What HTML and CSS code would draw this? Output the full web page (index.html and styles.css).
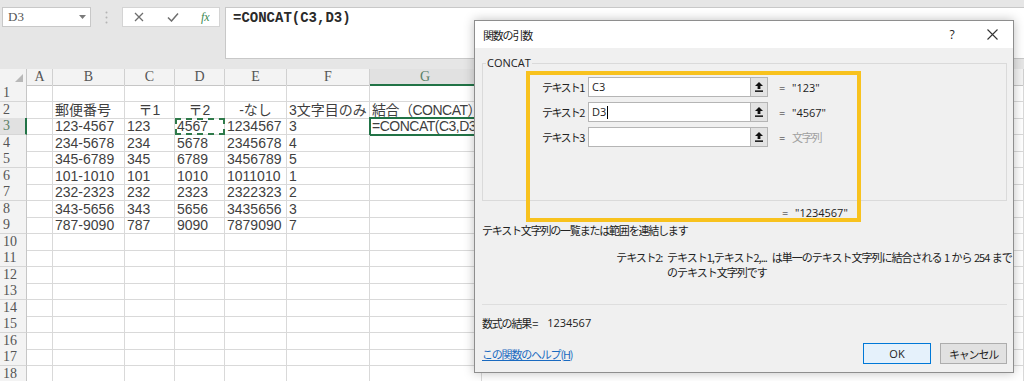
FILE: index.html
```html
<!DOCTYPE html>
<html lang="ja">
<head>
<meta charset="utf-8">
<title>関数の引数</title>
<link rel="stylesheet" href="styles.css">
</head>
<body>
<div class="app">
  <div class="fbar">
    <div class="namebox"><span class="nb-text">D3</span><svg class="nb-arrow" width="7" height="4" viewBox="0 0 7 4"><path d="M0 0H7L3.5 4Z" fill="#7a7a7a"/></svg></div>
    <div class="dots"><svg width="3" height="13" viewBox="0 0 3 13"><circle cx="1.5" cy="1.5" r="1" fill="#b4b4b4"/><circle cx="1.5" cy="6.5" r="1" fill="#b4b4b4"/><circle cx="1.5" cy="11.5" r="1" fill="#b4b4b4"/></svg></div>
    <div class="fbtns">
      <svg class="fb-x" width="10" height="10" viewBox="0 0 10 10"><path d="M1 1L9 9M9 1L1 9" stroke="#6e6e6e" stroke-width="1.3" fill="none"/></svg>
      <svg class="fb-ok" width="12" height="10" viewBox="0 0 12 10"><path d="M1 5.5L4.5 9L11 1.5" stroke="#6e6e6e" stroke-width="1.5" fill="none"/></svg>
      <span class="fb-fx">fx</span>
    </div>
    <div class="fbox">=CONCAT(C3,D3)</div>
  </div>

  <div class="sheet">
    <div class="r hdr"><span class="corner"><svg width="8" height="8" viewBox="0 0 8 8"><path d="M8 0V8H0Z" fill="#b8b8b8"/></svg></span><span>A</span><span>B</span><span>C</span><span>D</span><span>E</span><span>F</span><span class="sel">G</span><span>H</span></div>
    <div class="r"><span>1</span><span></span><span></span><span></span><span></span><span></span><span></span><span></span><span></span></div>
    <div class="r"><span>2</span><span></span><span>郵便番号</span><span class="c">〒1</span><span class="c">〒2</span><span class="c">-なし</span><span>3文字目のみ</span><span class="tight">結合（CONCAT）</span><span></span></div>
    <div class="r"><span class="sel">3</span><span></span><span>123-4567</span><span>123</span><span class="ants">4567</span><span>1234567</span><span>3</span><span class="active tight">=CONCAT(C3,D3)</span><span></span></div>
    <div class="r"><span>4</span><span></span><span>234-5678</span><span>234</span><span>5678</span><span>2345678</span><span>4</span><span></span><span></span></div>
    <div class="r"><span>5</span><span></span><span>345-6789</span><span>345</span><span>6789</span><span>3456789</span><span>5</span><span></span><span></span></div>
    <div class="r"><span>6</span><span></span><span>101-1010</span><span>101</span><span>1010</span><span>1011010</span><span>1</span><span></span><span></span></div>
    <div class="r"><span>7</span><span></span><span>232-2323</span><span>232</span><span>2323</span><span>2322323</span><span>2</span><span></span><span></span></div>
    <div class="r"><span>8</span><span></span><span>343-5656</span><span>343</span><span>5656</span><span>3435656</span><span>3</span><span></span><span></span></div>
    <div class="r"><span>9</span><span></span><span>787-9090</span><span>787</span><span>9090</span><span>7879090</span><span>7</span><span></span><span></span></div>
    <div class="r"><span>10</span><span></span><span></span><span></span><span></span><span></span><span></span><span></span><span></span></div>
    <div class="r"><span>11</span><span></span><span></span><span></span><span></span><span></span><span></span><span></span><span></span></div>
    <div class="r"><span>12</span><span></span><span></span><span></span><span></span><span></span><span></span><span></span><span></span></div>
    <div class="r"><span>13</span><span></span><span></span><span></span><span></span><span></span><span></span><span></span><span></span></div>
    <div class="r"><span>14</span><span></span><span></span><span></span><span></span><span></span><span></span><span></span><span></span></div>
    <div class="r"><span>15</span><span></span><span></span><span></span><span></span><span></span><span></span><span></span><span></span></div>
    <div class="r"><span>16</span><span></span><span></span><span></span><span></span><span></span><span></span><span></span><span></span></div>
    <div class="r"><span>17</span><span></span><span></span><span></span><span></span><span></span><span></span><span></span><span></span></div>
    <div class="r"><span>18</span><span></span><span></span><span></span><span></span><span></span><span></span><span></span><span></span></div>
  </div>

  <div class="dialog">
    <div class="titlebar">
      <span class="title jp">関数の引数</span>
      <span class="help">?</span>
      <svg class="close" width="11" height="11" viewBox="0 0 11 11"><path d="M0.5 0.5L10.5 10.5M10.5 0.5L0.5 10.5" stroke="#333" stroke-width="1.1" fill="none"/></svg>
    </div>
    <div class="dbody">
      <div class="group">
        <span class="legend">CONCAT</span>
        <div class="arg">
          <span class="alabel jp">テキスト1</span>
          <span class="ainput">C3</span>
          <span class="abtn"><svg width="8" height="10" viewBox="0 0 8 10"><path d="M4 0L8 4H5.4V7H2.6V4H0Z" fill="#111"/><rect x="0" y="8.4" width="8" height="1.5" fill="#111"/></svg></span>
          <span class="aeq">=</span>
          <span class="aval">"123"</span>
        </div>
        <div class="arg">
          <span class="alabel jp">テキスト2</span>
          <span class="ainput">D3<i class="caret"></i></span>
          <span class="abtn"><svg width="8" height="10" viewBox="0 0 8 10"><path d="M4 0L8 4H5.4V7H2.6V4H0Z" fill="#111"/><rect x="0" y="8.4" width="8" height="1.5" fill="#111"/></svg></span>
          <span class="aeq">=</span>
          <span class="aval">"4567"</span>
        </div>
        <div class="arg">
          <span class="alabel jp">テキスト3</span>
          <span class="ainput"></span>
          <span class="abtn"><svg width="8" height="10" viewBox="0 0 8 10"><path d="M4 0L8 4H5.4V7H2.6V4H0Z" fill="#111"/><rect x="0" y="8.4" width="8" height="1.5" fill="#111"/></svg></span>
          <span class="aeq">=</span>
          <span class="aval muted jp">文字列</span>
        </div>
      </div>
      <div class="result"><span class="aeq">=</span><span class="aval">"1234567"</span></div>
      <div class="desc jp">テキスト文字列の一覧または範囲を連結します</div>
      <div class="argdesc">
        <span class="adl jp">テキスト2:</span>
        <span class="adt">テキスト1,テキスト2,...&nbsp; は単一のテキスト文字列に結合される 1 から 254 まで<br>のテキスト文字列です</span>
      </div>
      <div class="sep"></div>
      <div class="formres"><span class="jp">数式の結果 =</span><span class="frv">1234567</span></div>
      <div class="footer">
        <a class="helplink jp" href="#">この関数のヘルプ(H)</a>
        <span class="btn ok">OK</span>
        <span class="btn cancel jp">キャンセル</span>
      </div>
    </div>
  </div>

  <div class="highlight"></div>
</div>
</body>
</html>
```

FILE: styles.css
```css
* { box-sizing: border-box; }
html, body { margin: 0; padding: 0; }
body {
  width: 1024px;
  height: 381px;
  overflow: hidden;
  background: #ffffff;
  font-family: "Noto Sans CJK JP", sans-serif;
}
.app { position: relative; width: 1024px; height: 381px; overflow: hidden; }

/* formula bar */
.fbar {
  display: flex;
  align-items: flex-start;
  height: 69px;
  padding-top: 7px;
  background: #e6e6e6;
}
.namebox {
  margin-left: 2px;
  width: 89px;
  height: 20px;
  background: #fff;
  border: 1px solid #c8c8c8;
  display: flex;
  align-items: center;
  padding-left: 5px;
}
.nb-text { font-family: "Liberation Serif", serif; font-size: 13px; color: #555; flex: 1; }
.nb-arrow { margin-right: 4px; }
.dots { width: 31px; height: 20px; display: flex; align-items: center; justify-content: center; }
.fbtns {
  width: 98px;
  height: 20px;
  background: #fff;
  border: 1px solid #d4d4d4;
  display: flex;
  align-items: center;
  padding-left: 11px;
}
.fb-x { margin-right: 23px; }
.fb-ok { margin-right: 22px; }
.fb-fx { font-family: "Liberation Serif", serif; font-style: italic; font-size: 12px; color: #3b8a52; }
.fbox {
  margin-left: 5px;
  flex: 1;
  height: 52px;
  background: #fff;
  border: 1px solid #c8c8c8;
  border-right: none;
  padding: 1px 0 0 7px;
  font-family: "Liberation Mono", monospace;
  font-weight: bold;
  font-size: 14px;
  line-height: 18px;
  color: #2a2a2a;
}

/* sheet */
.sheet { display: flex; flex-direction: column; }
.r {
  display: grid;
  grid-template-columns: 27px 26px 72px 50px 50px 62px 83px 112px 1fr;
  height: 16.5px;
}
.r > span {
  border-right: 1px solid #d9d9d9;
  border-bottom: 1px solid #d9d9d9;
  white-space: nowrap;
  overflow: visible;
  font-family: "Liberation Sans", "Noto Sans CJK JP", sans-serif;
  font-size: 14px;
  line-height: 16px;
  padding-left: 2px;
  color: #3f3f3f;
}
.r > span:first-child {
  background: #f3f3f3;
  border-right-color: #c6c6c6;
  border-bottom-color: #d6d6d6;
  font-family: "Liberation Serif", serif;
  font-size: 14px;
  text-align: left;
  padding-left: 3px;
  color: #555;
}
.r > span.c { text-align: center; padding-left: 0; }
.r > span.tight { letter-spacing: -0.5px; }
.hdr { height: 16px; }
.hdr > span {
  background: #f3f3f3;
  border-right-color: #d0d0d0;
  border-bottom-color: #c6c6c6;
  font-family: "Liberation Serif", serif;
  text-align: center;
  padding-left: 0;
  color: #555;
  line-height: 15px;
}
.hdr > span.corner { display: flex; align-items: flex-end; justify-content: flex-end; padding: 0 3px 3px 0; }
.hdr > span.sel { background: #e1e1e1; border-bottom: 2px solid #217346; color: #444; }
.r > span.sel { background: #e1e1e1; border-right: 2px solid #217346; color: #5a7f66; }
.ants { outline: 2px dashed #2f7a4a; outline-offset: -2px; }
.active { outline: 2px solid #217346; outline-offset: -1px; }

/* dialog */
.dialog {
  position: absolute;
  left: 474px;
  top: 20px;
  width: 540px;
  height: 353px;
  background: #f0f0f0;
  border: 1px solid #8e8e8e;
  box-shadow: 0 0 10px rgba(0, 0, 0, 0.25);
  font-size: 11px;
  color: #222;
}
.jp { letter-spacing: -1.2px; }
.titlebar {
  height: 27px;
  background: #fff;
  display: flex;
  align-items: center;
  padding-left: 8px;
}
.title { flex: 1; font-size: 11px; color: #222; }
.help { font-family: "Open Sans", sans-serif; font-size: 12px; color: #222; width: 12px; text-align: center; margin-right: 29px; }
.close { margin-right: 15px; }
.dbody { padding: 0 6px 0 7px; }
.group {
  position: relative;
  margin-top: 15px;
  height: 138px;
  border: 1px solid #dadada;
  padding-top: 13px;
  display: flex;
  flex-direction: column;
  gap: 5px;
}
.legend {
  position: absolute;
  left: 3px;
  top: -9px;
  background: #f0f0f0;
  padding: 0 1px;
  font-family: "Open Sans", sans-serif;
  font-size: 11px;
  line-height: 16px;
  color: #222;
}
.arg { display: flex; align-items: center; height: 20px; padding-left: 59px; }
.alabel { width: 46px; line-height: 20px; letter-spacing: -1.6px; }
.ainput {
  width: 162px;
  height: 20px;
  background: #fff;
  border: 1px solid #b5b5b5;
  border-right: none;
  padding-left: 3px;
  font-family: "Open Sans", sans-serif;
  font-size: 11px;
  line-height: 18px;
  display: flex;
  align-items: center;
}
.caret { display: inline-block; width: 1px; height: 13px; background: #000; margin-left: 1px; }
.abtn {
  width: 18px;
  height: 20px;
  background: #e3e3e3;
  border: 1px solid #b5b5b5;
  display: flex;
  align-items: center;
  justify-content: center;
}
.aeq { width: 13px; margin-left: 11px; font-family: "Open Sans", sans-serif; }
.aval { font-family: "Open Sans", sans-serif; font-size: 11px; }
.aval.muted { color: #a0a0a0; font-family: "Noto Sans CJK JP", sans-serif; }
.result { display: flex; margin-top: 4px; line-height: 16px; padding-left: 289px; }
.desc { line-height: 16px; margin-top: 1px; padding-left: 0; }
.argdesc { display: flex; margin-top: 12px; line-height: 15px; }
.adl { width: 185px; text-align: right; padding-right: 5px; flex: none; }
.adt { flex: 1; letter-spacing: -1px; white-space: nowrap; word-spacing: 1px; }
.sep { margin-top: 24px; height: 1px; background: #dedede; }
.formres { margin-top: 10px; line-height: 16px; display: flex; }
.frv { margin-left: 10px; font-family: "Open Sans", sans-serif; }
.footer { display: flex; align-items: center; margin-top: 12px; height: 21px; }
.helplink { flex: 1; color: #1a6ac0; text-decoration: underline; font-size: 11px; }
.btn {
  height: 21px;
  display: flex;
  align-items: center;
  justify-content: center;
  font-size: 11px;
}
.ok { width: 68px; background: #e5f1fb; border: 1px solid #0078d7; margin-right: 9px; font-family: "Open Sans", sans-serif; }
.cancel { width: 67px; background: #e1e1e1; border: 1px solid #adadad; }

/* annotation */
.highlight {
  position: absolute;
  left: 526px;
  top: 71px;
  width: 335px;
  height: 151px;
  border: 4px solid #f8c21e;
  pointer-events: none;
}
```
